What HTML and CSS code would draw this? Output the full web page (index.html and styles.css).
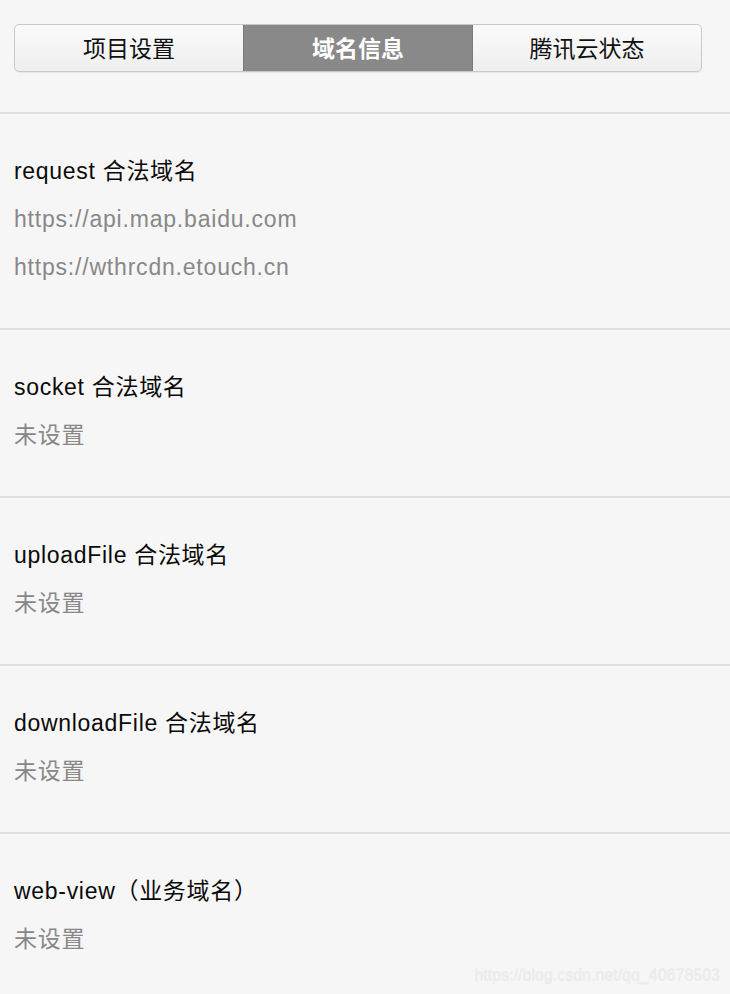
FILE: index.html
```html
<!DOCTYPE html>
<html lang="zh-CN">
<head>
<meta charset="utf-8">
<title>域名信息</title>
<link rel="stylesheet" href="styles.css">
</head>
<body>
<div class="page">
  <header class="header">
    <nav class="segmented">
      <div class="seg">项目设置</div>
      <div class="seg active">域名信息</div>
      <div class="seg">腾讯云状态</div>
    </nav>
  </header>
  <section class="block">
    <div class="title">request 合法域名</div>
    <div class="value">https://api.map.baidu.com</div>
    <div class="value">https://wthrcdn.etouch.cn</div>
  </section>
  <section class="block">
    <div class="title">socket 合法域名</div>
    <div class="value">未设置</div>
  </section>
  <section class="block">
    <div class="title">uploadFile 合法域名</div>
    <div class="value">未设置</div>
  </section>
  <section class="block">
    <div class="title">downloadFile 合法域名</div>
    <div class="value">未设置</div>
  </section>
  <section class="block last">
    <div class="title">web-view（业务域名）</div>
    <div class="value">未设置</div>
  </section>
  <div class="watermark">https://blog.csdn.net/qq_40678503</div>
</div>
</body>
</html>
```

FILE: styles.css
```css
html, body {
  margin: 0;
  padding: 0;
  background: #f7f6f6;
}
body {
  font-family: "Liberation Sans", "Noto Sans CJK SC", sans-serif;
  color: #111;
}
.page {
  position: relative;
  width: 730px;
  height: 994px;
  overflow: hidden;
}
.header {
  padding: 24px 28px 40px 14px;
  border-bottom: 2px solid #dedede;
}
.segmented {
  display: grid;
  grid-template-columns: 228px 230px 1fr;
  height: 48px;
  box-sizing: border-box;
  border: 1px solid #c9c9c9;
  border-radius: 5px;
  overflow: hidden;
  background: linear-gradient(#fbfbfb, #eeeeee);
  box-shadow: 0 1px 1px rgba(0,0,0,0.06);
}
.seg {
  display: flex;
  align-items: center;
  justify-content: center;
  padding-bottom: 3px;
  font-size: 23px;
  color: #111;
}
.seg.active {
  background: #898989;
  color: #fff;
  font-weight: bold;
  box-shadow: inset 1px 0 0 #7a7a7a, inset -1px 0 0 #7a7a7a;
}
.block {
  padding: 33px 14px 37px;
  border-bottom: 2px solid #dedede;
}
.block.last {
  border-bottom: none;
}
.title, .value {
  height: 48px;
  line-height: 48px;
  font-size: 23px;
  white-space: nowrap;
  letter-spacing: 0.7px;
}
.title {
  color: #0a0a0a;
}
.value {
  color: #888;
  letter-spacing: 0.8px;
}
.watermark {
  position: absolute;
  right: 10px;
  bottom: 10px;
  font-size: 16px;
  color: #ececec;
  text-shadow: 0 1px 1px rgba(0,0,0,0.06);
}
```
